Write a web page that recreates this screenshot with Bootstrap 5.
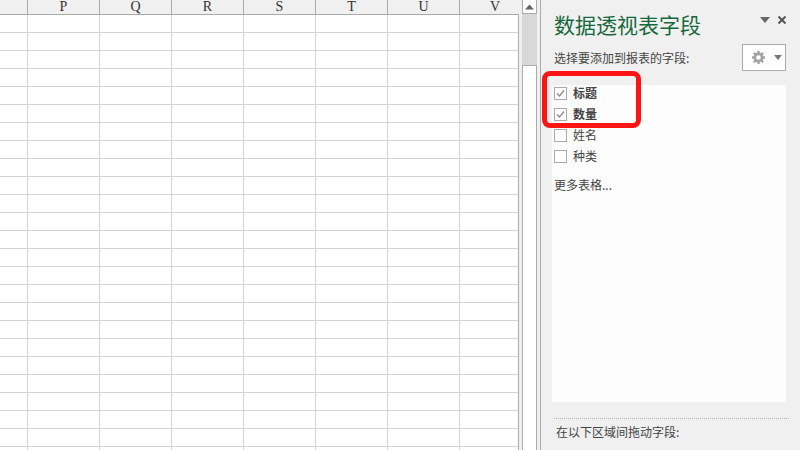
<!DOCTYPE html>
<html lang="zh"><head><meta charset="utf-8">
<link href="https://cdn.jsdelivr.net/npm/bootstrap@5.3.0/dist/css/bootstrap.min.css" rel="stylesheet">
<style>
html,body{margin:0;width:800px;height:450px;overflow:hidden;background:#f0f0f0}
.app{width:800px;height:450px;font-family:"Noto Sans CJK SC","Liberation Sans",sans-serif}
.sheet{width:522px;height:450px;flex:none;overflow:hidden}
.colhead{height:15px;background:#f0f0f0}
.hc{width:72px;height:15px;flex:none;border-right:1px solid #ababab;border-bottom:1px solid #ababab;font:14px/14px "Liberation Serif",serif;color:#333;text-align:center}
.hc0{width:28px}
.hlast{width:59px;border-right:0;padding-left:12px;padding-right:1px}
.gridbody{width:519px;height:435px;border-right:1px solid #ababab;background-color:#fff;background-image:linear-gradient(#d4d4d4 1px,transparent 1px),linear-gradient(90deg,#d4d4d4 1px,transparent 1px);background-size:100% 18px,72px 100%;background-position:0 17px,27px 0}
.sbar{width:15px;flex:none;background:#d8d8d8}
.sup{height:14px;background:#fff;border:1px solid #ababab;border-top:0;display:flex;align-items:center;justify-content:center}
.sthumb{height:51px}
.srest{flex:1;background:#fff;border:1px solid #ababab;border-bottom:0}
.gapz{width:3px;flex:none}
.paneedge{width:1px;background:#ababab;flex:none}
.pane{flex:1;position:relative;background:#f0f0f0;min-width:0}
.ptitle{font-size:21px;line-height:26px;color:#17693c;margin:11px 0 0 13px;white-space:nowrap}
.ctl{position:absolute;left:219px;top:16px}
.toprow{margin-top:7px}
.sublabel{font-size:12px;color:#444;line-height:16px;margin-left:13px}
.gearbtn{width:44px;height:27px;border:1px solid #ababab;background:#fff;margin-right:14px;padding-left:9px;gap:9px}
.fieldlist{margin:14px 14px 0 11px;height:317px;background:#fdfdfd;padding:0 2px;gap:5px}
.fielditem{height:16px;font-size:12px;line-height:16px;color:#444;gap:6px}
.cb{width:13px;height:13px;border:1px solid #ababab;background:#fff;flex:none;display:flex}
.more{font-size:12px;color:#444;line-height:16px;margin-top:8px}
.dotline{margin:16px 11px 0 13px;border-top:1px dotted #b5b5b5}
.dragl{font-size:12px;color:#444;line-height:16px;margin:5px 0 0 15px}
.redbox{position:absolute;left:1px;top:71px;width:99px;height:57px;border:5px solid #ff1414;border-radius:8px}
</style></head><body>
<div class="app d-flex">
<div class="sheet">
<div class="colhead d-flex">
<div class="hc hc0"></div><div class="hc">P</div><div class="hc">Q</div><div class="hc">R</div><div class="hc">S</div><div class="hc">T</div><div class="hc">U</div><div class="hc hlast">V</div>
</div>
<div class="gridbody"></div>
</div>
<div class="sbar d-flex flex-column">
<div class="sup"><svg width="9" height="6" viewBox="0 0 9 6"><path d="M0 5.5L4.5 .5 9 5.5z" fill="#666"/></svg></div>
<div class="sthumb"></div>
<div class="srest"></div>
</div>
<div class="gapz"></div><div class="paneedge"></div>
<div class="pane">
<div class="ptitle">数据透视表字段</div>
<div class="ctl d-flex align-items-center gap-2">
<svg width="10" height="6" viewBox="0 0 10 6"><path d="M0 0h10L5 6z" fill="#666"/></svg>
<svg width="8" height="8" viewBox="0 0 8 8"><path d="M.5.5l7 7M7.5.5l-7 7" stroke="#555" stroke-width="2"/></svg>
</div>
<div class="toprow d-flex justify-content-between align-items-center">
<div class="sublabel">选择要添加到报表的字段:</div>
<div class="gearbtn d-flex align-items-center">
<svg width="13" height="13" viewBox="0 0 13 13"><circle cx="6.5" cy="6.5" r="3.6" fill="none" stroke="#a3a3a3" stroke-width="2.6"/><path d="M6.5 0v2.5M6.5 10.5V13M0 6.5h2.5M10.5 6.5H13M1.9 1.9l1.8 1.8M9.3 9.3l1.8 1.8M11.1 1.9L9.3 3.7M3.7 9.3l-1.8 1.8" stroke="#a3a3a3" stroke-width="2.4"/></svg>
<svg width="8" height="5" viewBox="0 0 8 5"><path d="M0 0h8L4 5z" fill="#777"/></svg>
</div>
</div>
<div class="fieldlist d-flex flex-column">
<div class="fielditem d-flex align-items-center fw-bold"><span class="cb"><svg width="11" height="11" viewBox="0 0 11 11"><path d="M2 5.5l2.5 2.5L9 2.5" fill="none" stroke="#8a8a8a" stroke-width="1.3"/></svg></span><span>标题</span></div>
<div class="fielditem d-flex align-items-center fw-bold"><span class="cb"><svg width="11" height="11" viewBox="0 0 11 11"><path d="M2 5.5l2.5 2.5L9 2.5" fill="none" stroke="#8a8a8a" stroke-width="1.3"/></svg></span><span>数量</span></div>
<div class="fielditem d-flex align-items-center"><span class="cb"></span><span>姓名</span></div>
<div class="fielditem d-flex align-items-center"><span class="cb"></span><span>种类</span></div>
<div class="more">更多表格...</div>
</div>
<div class="dotline"></div>
<div class="dragl">在以下区域间拖动字段:</div>
<div class="redbox"></div>
</div>
</div>
<script src="https://cdn.jsdelivr.net/npm/bootstrap@5.3.0/dist/js/bootstrap.bundle.min.js"></script>
</body></html>
